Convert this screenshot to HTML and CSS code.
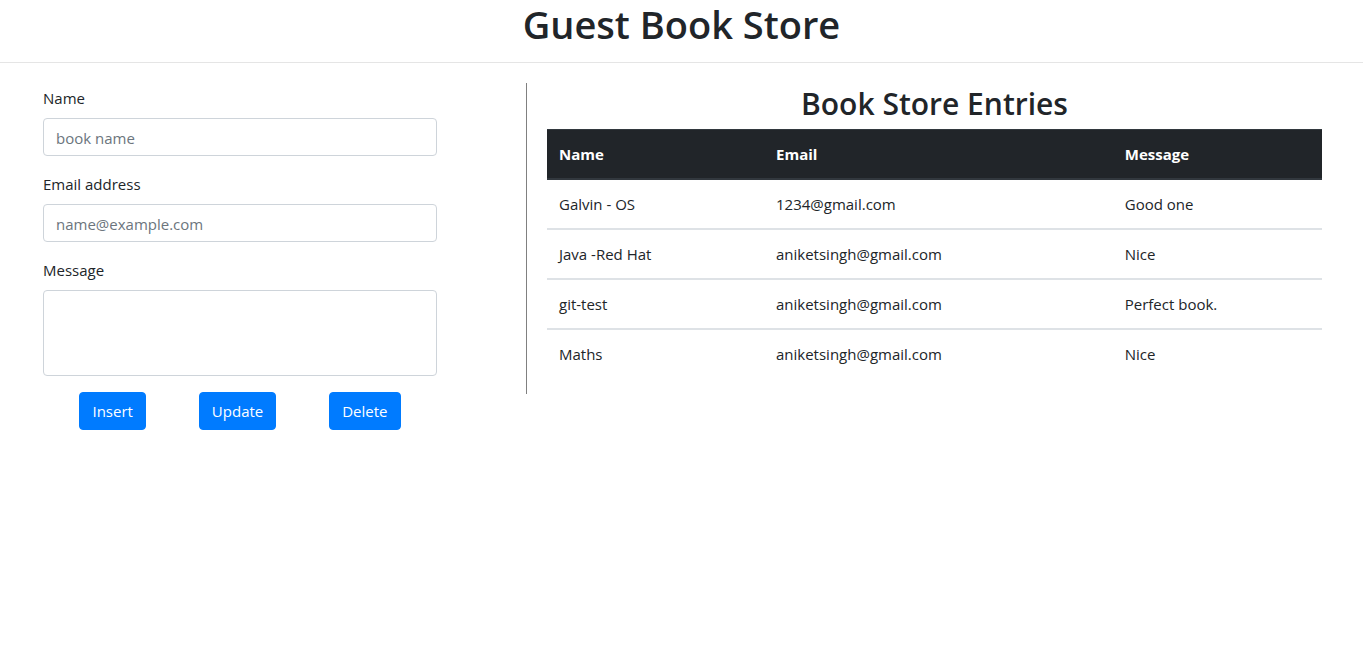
FILE: index.html
```html
<!DOCTYPE html>
<html lang="en">
<head>
  <meta charset="utf-8">
  <meta name="viewport" content="width=device-width, initial-scale=1">
  <title>Guest Book Store</title>
  <link rel="stylesheet" href="styles.css">
</head>
<body>
  <header class="page-header">
    <h1 class="page-title">Guest Book Store</h1>
  </header>
  <main class="layout">
    <form class="entry-form">
      <div class="form-group">
        <label class="form-label" for="name">Name</label>
        <input class="form-control" type="text" id="name" placeholder="book name">
      </div>
      <div class="form-group">
        <label class="form-label" for="email">Email address</label>
        <input class="form-control" type="email" id="email" placeholder="name@example.com">
      </div>
      <div class="form-group">
        <label class="form-label" for="message">Message</label>
        <textarea class="form-control message" id="message" rows="3"></textarea>
      </div>
      <div class="actions">
        <button class="btn" type="button">Insert</button>
        <button class="btn" type="button">Update</button>
        <button class="btn" type="button">Delete</button>
      </div>
    </form>
    <section class="entries">
      <h2 class="entries-title">Book Store Entries</h2>
      <table class="table">
        <colgroup>
          <col class="col-name">
          <col class="col-email">
          <col class="col-message">
        </colgroup>
        <thead>
          <tr><th scope="col">Name</th><th scope="col">Email</th><th scope="col">Message</th></tr>
        </thead>
        <tbody>
          <tr><td>Galvin - OS</td><td>1234@gmail.com</td><td>Good one</td></tr>
          <tr><td>Java -Red Hat</td><td>aniketsingh@gmail.com</td><td>Nice</td></tr>
          <tr><td>git-test</td><td>aniketsingh@gmail.com</td><td>Perfect book.</td></tr>
          <tr><td>Maths</td><td>aniketsingh@gmail.com</td><td>Nice</td></tr>
        </tbody>
      </table>
    </section>
  </main>
</body>
</html>
```

FILE: styles.css
```css
*,
*::before,
*::after {
  box-sizing: border-box;
}

body {
  margin: 0;
  background: #fff;
  color: #212529;
  font-family: "Segoe UI", "Open Sans", "Noto Sans", sans-serif;
  font-size: 15px;
  line-height: 24px;
}

.page-header {
  padding-bottom: 14px;
  border-bottom: 1px solid #e5e5e5;
  text-align: center;
}

.page-title {
  margin: 0;
  font-size: 38px;
  font-weight: 600;
  line-height: 48px;
}

.layout {
  display: grid;
  grid-template-columns: 394fr 796fr;
  column-gap: 89px;
  align-items: start;
  padding: 20px 41px 20px 43px;
}

.entry-form {
  padding-top: 3px;
}

.form-group {
  margin-bottom: 16px;
}

.form-label {
  display: block;
  margin-bottom: 8px;
}

.form-control {
  display: block;
  width: 100%;
  height: 38px;
  padding: 7px 12px 5px;
  border: 1px solid #ced4da;
  border-radius: 4px;
  background: #fff;
  color: #495057;
  font: inherit;
}

.form-control::placeholder {
  color: #6c757d;
  opacity: 1;
}

.message {
  height: auto;
  resize: none;
}

.actions {
  display: flex;
  justify-content: space-around;
  padding: 0 10px;
}

.btn {
  padding: 6px 12px;
  border: 1px solid #007bff;
  border-radius: 4px;
  background: #007bff;
  color: #fff;
  font: inherit;
  cursor: pointer;
}

.entries {
  padding: 0 0 16px 20px;
  border-left: 1px solid #808080;
}

.entries-title {
  margin: 0;
  padding: 2px 0 6px;
  font-size: 30px;
  font-weight: 600;
  line-height: 38px;
  text-align: center;
}

.table {
  width: 100%;
  border-spacing: 0;
  table-layout: fixed;
}

.col-name {
  width: 28%;
}

.col-email {
  width: 45%;
}

.col-message {
  width: 27%;
}

.table th,
.table td {
  padding: 12px;
  text-align: left;
}

.table th {
  border-top: 1px solid #32383e;
  border-bottom: 2px solid #32383e;
  background: #212529;
  color: #fff;
  font-weight: 700;
}

.table tbody tr + tr td {
  border-top: 2px solid #dee2e6;
}
```
